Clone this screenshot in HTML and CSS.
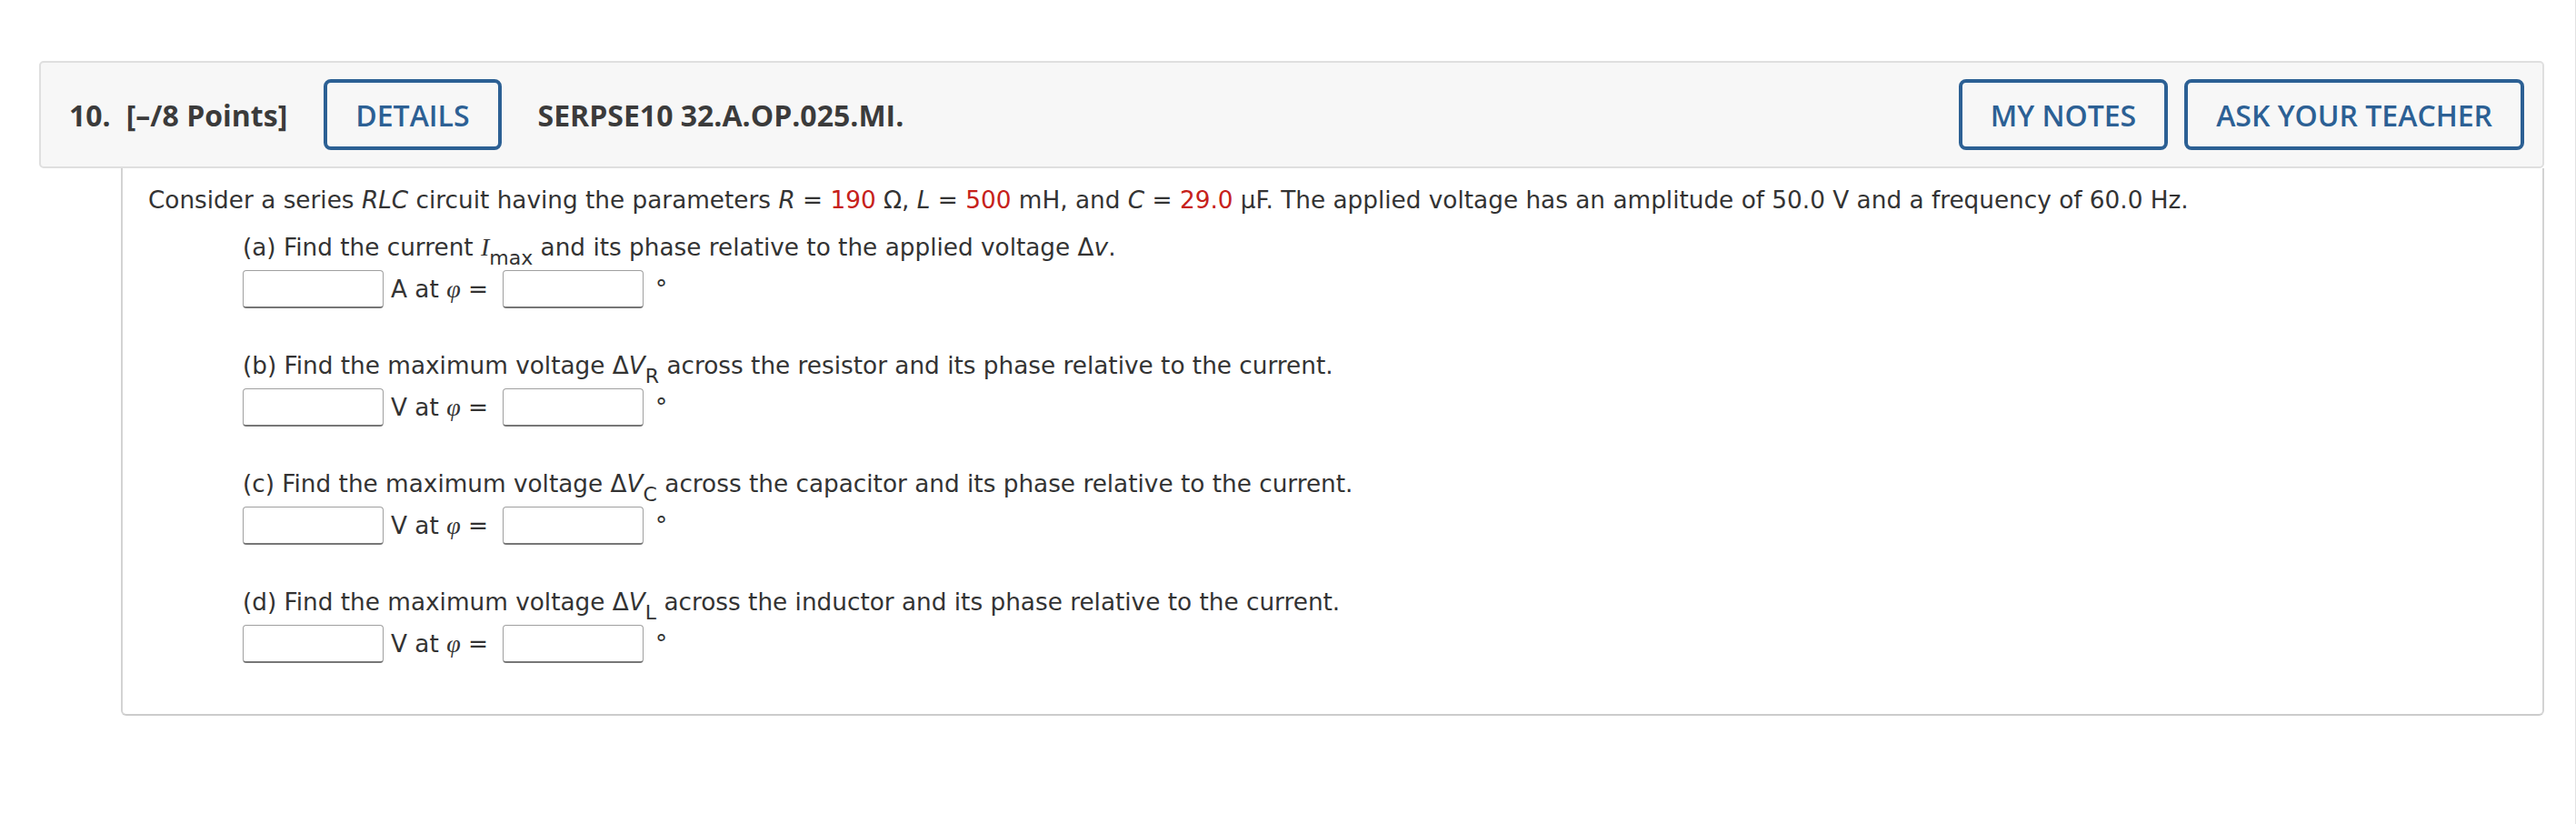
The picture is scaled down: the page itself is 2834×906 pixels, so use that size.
FILE: index.html
```html
<!DOCTYPE html>
<html lang="en">
<head>
<meta charset="utf-8">
<title>Question 10</title>
<link rel="stylesheet" href="styles.css">
</head>
<body>
<div class="page">
  <div class="question">
    <div class="qhead">
      <span class="qnum">10.</span>
      <span class="pts">[–/8 Points]</span>
      <button class="btn btn-details">DETAILS</button>
      <span class="qid">SERPSE10 32.A.OP.025.MI.</span>
      <span class="spacer"></span>
      <button class="btn">MY NOTES</button>
      <button class="btn">ASK YOUR TEACHER</button>
    </div>
    <div class="qbody">
      <p class="intro">Consider a series <i>RLC</i> circuit having the parameters <i>R</i> = <span class="red">190</span> Ω, <i>L</i> = <span class="red">500</span> mH, and <i>C</i> = <span class="red">29.0</span> µF. The applied voltage has an amplitude of 50.0 V and a frequency of 60.0 Hz.</p>

      <div class="part part-first">
        <p class="prompt">(a) Find the current <i class="math">I</i><span class="sub">max</span> and its phase relative to the applied voltage Δ<i>v</i>.</p>
        <div class="ansrow">
          <input class="ans" type="text">
          <span class="unit">A at <i class="math">φ</i> =</span>
          <input class="ans" type="text">
          <span class="deg">°</span>
        </div>
      </div>

      <div class="part">
        <p class="prompt">(b) Find the maximum voltage Δ<i>V</i><span class="sub">R</span> across the resistor and its phase relative to the current.</p>
        <div class="ansrow">
          <input class="ans" type="text">
          <span class="unit">V at <i class="math">φ</i> =</span>
          <input class="ans" type="text">
          <span class="deg">°</span>
        </div>
      </div>

      <div class="part">
        <p class="prompt">(c) Find the maximum voltage Δ<i>V</i><span class="sub">C</span> across the capacitor and its phase relative to the current.</p>
        <div class="ansrow">
          <input class="ans" type="text">
          <span class="unit">V at <i class="math">φ</i> =</span>
          <input class="ans" type="text">
          <span class="deg">°</span>
        </div>
      </div>

      <div class="part">
        <p class="prompt">(d) Find the maximum voltage Δ<i>V</i><span class="sub">L</span> across the inductor and its phase relative to the current.</p>
        <div class="ansrow">
          <input class="ans" type="text">
          <span class="unit">V at <i class="math">φ</i> =</span>
          <input class="ans" type="text">
          <span class="deg">°</span>
        </div>
      </div>
    </div>
  </div>
</div>
</body>
</html>
```

FILE: styles.css
```css
html, body {
  margin: 0;
  padding: 0;
  background: #ffffff;
}

.page {
  box-sizing: border-box;
  min-height: 100vh;
  padding: 67px 0 0 43px;
  width: 2834px;
  border-right: 1px solid #e2e2e2;
}

.question {
  width: 2756px;
}

.qhead {
  display: flex;
  align-items: center;
  box-sizing: border-box;
  height: 118px;
  padding: 0 20px 0 31px;
  background: #f7f7f7;
  border: 2px solid #dfdfdf;
  border-radius: 5px;
  font-family: "Open Sans", "Liberation Sans", sans-serif;
  font-weight: 700;
  font-size: 32px;
  color: #3b3b3b;
}

.qnum {
  margin-right: 17px;
}

.pts {
  margin-right: 40px;
}

.qid {
  margin-left: 40px;
}

.spacer {
  flex: 1;
}

.btn {
  box-sizing: border-box;
  height: 78px;
  padding: 0 31px;
  background: transparent;
  border: 4px solid #2c6094;
  border-radius: 8px;
  font-family: "Open Sans", "Liberation Sans", sans-serif;
  font-weight: 600;
  font-size: 32px;
  color: #2c6094;
  display: inline-flex;
  align-items: center;
  justify-content: center;
  white-space: nowrap;
}

.btn + .btn {
  margin-left: 18px;
}

.qbody {
  margin-left: 90px;
  padding: 17px 0 56px 28px;
  border-left: 2px solid #d3d3d3;
  border-right: 2px solid #d3d3d3;
  border-bottom: 2px solid #cccccc;
  border-radius: 0 0 6px 6px;
  font-family: "DejaVu Sans", Verdana, sans-serif;
  font-size: 26.3px;
  line-height: 36px;
  color: #333333;
}

.qbody p {
  margin: 0;
}

.red {
  color: #c6211b;
}

.math {
  font-family: "Liberation Serif", "DejaVu Serif", serif;
  font-style: italic;
  font-size: 28px;
}

.sub {
  font-size: 22px;
  line-height: 0;
  vertical-align: -10px;
}

.part {
  margin: 45px 0 0 104px;
}

.part-first {
  margin-top: 16px;
}

.ansrow {
  display: flex;
  align-items: center;
  height: 42px;
  margin-top: 7px;
}

.ans {
  box-sizing: border-box;
  width: 155px;
  height: 42px;
  margin: 0;
  padding: 0 6px;
  background: #ffffff;
  border: 1px solid #a0a0a0;
  border-bottom: 2px solid #777777;
  border-radius: 4px;
  font-family: "DejaVu Sans", Verdana, sans-serif;
  font-size: 24px;
}

.unit {
  margin: 0 16px 0 8px;
  white-space: nowrap;
}

.deg {
  margin-left: 13px;
}
```
